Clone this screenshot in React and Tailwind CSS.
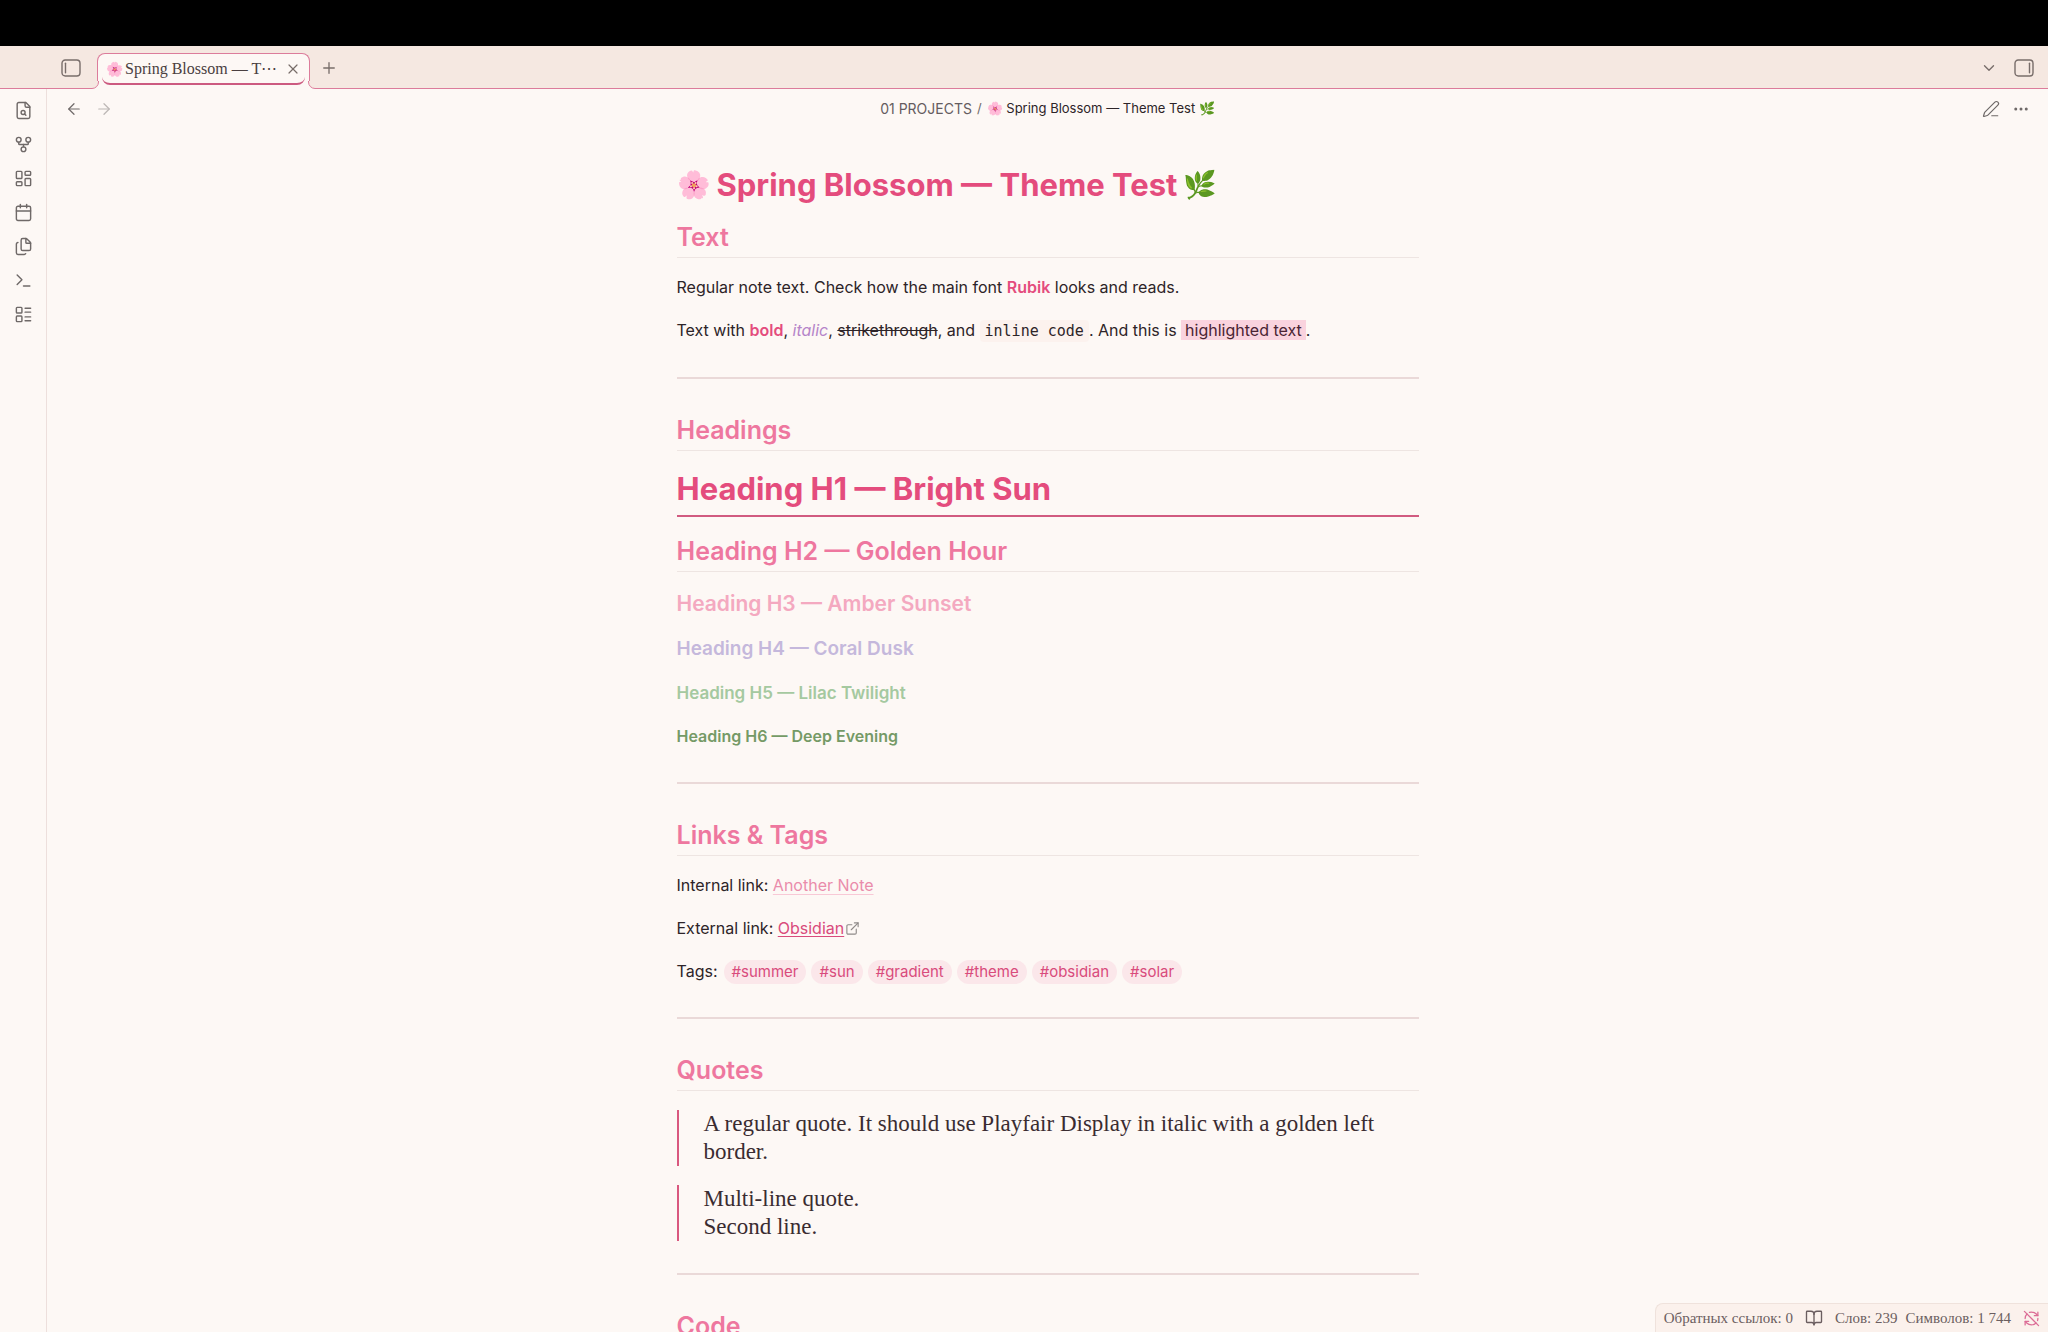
import {
  ArrowLeft,
  ArrowRight,
  BookOpen,
  Calendar,
  ChevronDown,
  Ellipsis,
  ExternalLink,
  Files,
  GitFork,
  LayoutDashboard,
  LayoutList,
  PenLine,
  Plus,
  RefreshCwOff,
  Terminal,
  X,
} from 'lucide-react';

function FileSearchIcon({ size, strokeWidth }) {
  return (
    <svg
      width={size}
      height={size}
      viewBox="0 0 24 24"
      fill="none"
      stroke="currentColor"
      strokeWidth={strokeWidth}
      strokeLinecap="round"
      strokeLinejoin="round"
    >
      <path d="M15 2H6a2 2 0 0 0-2 2v16a2 2 0 0 0 2 2h12a2 2 0 0 0 2-2V7Z" />
      <path d="M14 2v4a2 2 0 0 0 2 2h4" />
      <circle cx="11.5" cy="14.5" r="2.5" />
      <path d="M13.3 16.3 15 18" />
    </svg>
  );
}

const ribbonItems = [
  { label: 'Open quick switcher', icon: FileSearchIcon },
  { label: 'Open graph view', icon: GitFork },
  { label: 'Create new canvas', icon: LayoutDashboard },
  { label: "Open today's daily note", icon: Calendar },
  { label: 'Insert template', icon: Files },
  { label: 'Open command palette', icon: Terminal },
  { label: 'Create new base', icon: LayoutList },
];

const tags = ['#summer', '#sun', '#gradient', '#theme', '#obsidian', '#solar'];

function SidebarIcon({ side }) {
  return (
    <svg width="20" height="18" viewBox="0 0 20 18" fill="none" stroke="currentColor" strokeWidth="1.4" strokeLinecap="round">
      <rect x="1" y="1" width="18" height="16" rx="3.2" />
      {side === 'left' ? <path d="M4.5 4.2v9.6" /> : <path d="M15.5 4.2v9.6" />}
    </svg>
  );
}

/* Curved foot that joins the active tab to the line under the strip */
function TabFoot({ side }) {
  return (
    <svg
      className={side === 'left' ? 'absolute bottom-0 -left-[7px]' : 'absolute bottom-0 -right-[7px] -scale-x-100'}
      width="8"
      height="8"
      viewBox="0 0 8 8"
      fill="none"
    >
      <path d="M0 0h8v8H0z" fill="#fdf8f5" />
      <path d="M0 0h7.5v1a6.5 6.5 0 0 1-6.5 6.5H0z" fill="#f5e8e1" />
      <path d="M7.5 0v1a6.5 6.5 0 0 1-6.5 6.5H0" stroke="#dc7c9b" />
    </svg>
  );
}

function SectionTitle({ children }) {
  return (
    <h2 className="border-b border-[#eee5e2] pb-1 text-[25px] leading-8 font-semibold text-[#ee779f]">{children}</h2>
  );
}

function Divider() {
  return <hr className="mt-8 mb-[35px] border-t-2 border-[#ead9d8]" />;
}

function Quote({ children }) {
  return (
    <blockquote className="mt-[19px] border-l-2 border-[#d9587f] pl-[25px] font-['Liberation_Serif',serif] text-[23px] leading-7 text-[#3a2c31]">
      {children}
    </blockquote>
  );
}

export default function App() {
  return (
    <div className="relative flex h-screen flex-col overflow-hidden bg-[#fdf8f5] font-[Inter,sans-serif] text-[#2d2428]">
      <div className="h-[46px] shrink-0 bg-black"></div>

      {/* Tab strip */}
      <header className="flex h-[43px] shrink-0 items-end bg-[#f5e8e1] text-[#786d6a]">
        <div className="flex h-full w-[97px] items-center justify-end border-b border-[#dc7c9b] pt-0.5 pr-4">
          <button type="button" aria-label="Toggle left sidebar">
            <SidebarIcon side="left" />
          </button>
        </div>
        <div className="relative h-9 w-[213px] rounded-t-lg border border-b-0 border-[#dc7c9b] bg-[#fdf8f5] px-1 pb-1">
          <TabFoot side="left" />
          <TabFoot side="right" />
          <div className="flex h-full items-center justify-between rounded-lg border-b-2 border-[#cc5a80] pl-1">
            <div className="flex items-center gap-0.5 whitespace-nowrap text-[#4a3f41]">
              <span className="text-sm">🌸</span>
              <span className="font-['Liberation_Serif',serif] text-base">Spring Blossom — T⋯</span>
            </div>
            <button type="button" aria-label="Close tab" className="px-1">
              <X size={16} strokeWidth={1.8} />
            </button>
          </div>
        </div>
        <div className="flex h-full flex-1 items-center justify-between border-b border-[#dc7c9b] pt-0.5 pr-[14px] pl-[10px]">
          <button type="button" aria-label="New tab">
            <Plus size={18} strokeWidth={1.8} />
          </button>
          <div className="flex items-center gap-4">
            <button type="button" aria-label="Tab list">
              <ChevronDown size={18} strokeWidth={1.8} />
            </button>
            <button type="button" aria-label="Toggle right sidebar">
              <SidebarIcon side="right" />
            </button>
          </div>
        </div>
      </header>

      <div className="flex min-h-0 flex-1">
        {/* Ribbon */}
        <nav className="flex w-[47px] shrink-0 flex-col items-center gap-[15px] border-r border-[#eddfdc] pt-3 text-[#6f6968]">
          {ribbonItems.map(({ label, icon: Icon }) => (
            <button key={label} type="button" aria-label={label}>
              <Icon size={19} strokeWidth={1.8} />
            </button>
          ))}
        </nav>

        <main className="min-w-0 flex-1">
          {/* View header */}
          <div className="flex h-10 items-center justify-between px-[18px] text-[#6f6968]">
            <div className="flex w-24 items-center gap-3">
              <button type="button" aria-label="Back">
                <ArrowLeft size={18} strokeWidth={1.6} />
              </button>
              <button type="button" aria-label="Forward" disabled className="opacity-45">
                <ArrowRight size={18} strokeWidth={1.6} />
              </button>
            </div>
            <div className="flex items-center gap-[5px] text-[13px]">
              <a href="#projects" className="text-sm text-[#655c5f]">01 PROJECTS</a>
              <span>/</span>
              <span className="text-[#2d2428]">🌸 Spring Blossom — Theme Test 🌿</span>
            </div>
            <div className="flex w-24 items-center justify-end gap-3">
              <button type="button" aria-label="Edit note">
                <PenLine size={18} strokeWidth={1.6} />
              </button>
              <button type="button" aria-label="More options">
                <Ellipsis size={18} strokeWidth={2} />
              </button>
            </div>
          </div>

          {/* Note */}
          <article className="mx-auto w-full max-w-[742px] pt-8 text-base leading-[27px]">
            <h1 className="mb-3 flex items-center gap-1.5 text-[31px] leading-[48px] font-bold text-[#e44c7d]">
              <span className="text-[27px]">🌸</span>
              Spring Blossom — Theme Test
              <span className="text-[27px]">🌿</span>
            </h1>

            <SectionTitle>Text</SectionTitle>
            <p className="mt-4">
              Regular note text. Check how the main font <strong className="font-semibold text-[#e44c7d]">Rubik</strong> looks and reads.
            </p>
            <p className="mt-4">
              Text with <strong className="font-semibold text-[#e44c7d]">bold</strong>, <em className="text-[#b584c9]">italic</em>,{' '}
              <s>strikethrough</s>, and{' '}
              <code className="rounded bg-[#fcf2ee] px-[5px] py-0.5 font-['DejaVu_Sans_Mono',monospace] text-[15px]">inline code</code>. And this is{' '}
              <mark className="bg-[#fad3de] px-1 text-[#4a2433]">highlighted text</mark>.
            </p>

            <Divider />

            <SectionTitle>Headings</SectionTitle>
            <h1 className="mt-4 mb-[18px] border-b-2 border-[#d15b80] pb-1 text-[31px] leading-[44px] font-bold text-[#e44c7d]">
              Heading H1 — Bright Sun
            </h1>
            <SectionTitle>Heading H2 — Golden Hour</SectionTitle>
            <h3 className="mt-4 text-[21px] leading-[31px] font-semibold text-[#f4a9c0]">Heading H3 — Amber Sunset</h3>
            <h4 className="mt-4 text-[19px] leading-7 font-semibold text-[#c5b8dc]">Heading H4 — Coral Dusk</h4>
            <h5 className="mt-4 text-[17px] leading-7 font-semibold text-[#a5c9a0]">Heading H5 — Lilac Twilight</h5>
            <h6 className="mt-4 text-base leading-[27px] font-semibold text-[#759a66]">Heading H6 — Deep Evening</h6>

            <Divider />

            <SectionTitle>Links &amp; Tags</SectionTitle>
            <p className="mt-4">
              Internal link:{' '}
              <a href="#another-note" className="text-[#ea8cab] underline decoration-[#f8c9d6] underline-offset-3">Another Note</a>
            </p>
            <p className="mt-4">
              External link:{' '}
              <a href="#obsidian" className="text-[#d94b7c] underline underline-offset-2">Obsidian</a>
              <ExternalLink size={15} strokeWidth={1.8} className="ml-px inline align-[-2px] text-[#8f8a89]" />
            </p>
            <div className="mt-4 flex items-center gap-[5px]">
              <span className="mr-px">Tags:</span>
              {tags.map((tag) => (
                <a key={tag} href={tag} className="rounded-full bg-[#fbe7ea] px-2 text-[15px] leading-6 text-[#d94b7c]">{tag}</a>
              ))}
            </div>

            <Divider />

            <SectionTitle>Quotes</SectionTitle>
            <Quote>A regular quote. It should use Playfair Display in italic with a golden left border.</Quote>
            <Quote>
              Multi-line quote.
              <br />
              Second line.
            </Quote>

            <Divider />

            <SectionTitle>Code</SectionTitle>
          </article>
        </main>
      </div>

      {/* Status bar */}
      <footer className="absolute right-0 bottom-0 flex h-[29px] items-center rounded-tl-lg border-t border-l border-[#efe2dc] bg-[#fbf1ec] pr-2 pl-2 font-['Liberation_Serif',serif] text-[15px] text-[#6b5e60]">
        <span>Обратных ссылок: 0</span>
        <BookOpen size={18} strokeWidth={1.8} className="mr-3 ml-3" />
        <span>Слов: 239</span>
        <span className="mr-3 ml-2">Символов: 1 744</span>
        <RefreshCwOff size={17} strokeWidth={1.8} className="text-[#dc6c96]" />
      </footer>
    </div>
  );
}
